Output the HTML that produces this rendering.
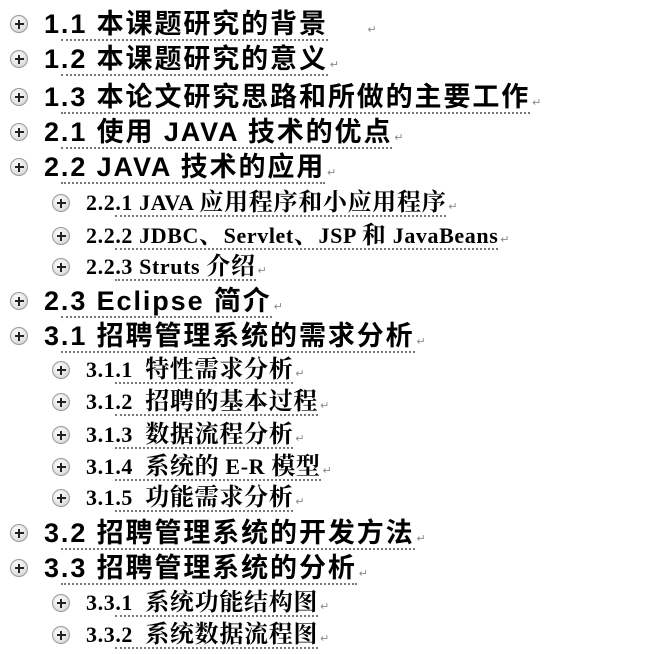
<!DOCTYPE html>
<html><head><meta charset="utf-8"><style>
body{margin:0;width:645px;height:654px;background:#fff;position:relative;overflow:hidden}
.r{position:absolute;white-space:nowrap;color:#000}
.l1{left:44px;font:bold 27px/30px "Liberation Sans","Noto Sans CJK SC",sans-serif;letter-spacing:1.9px}
.l2{left:86px;font:bold 22px/24px "Liberation Serif","Noto Serif CJK SC",serif;letter-spacing:0.6px}
.c{font-size:24px;letter-spacing:0.7px;line-height:20px}
.u{border-bottom:2px dotted #777}
.ic{position:absolute;width:16px;height:16px;border-radius:50%;border:1px solid #999;background:radial-gradient(circle at 40% 35%,#fff,#e2e2e2 60%,#c4c4c4);box-sizing:content-box}
.ic:before{content:"";position:absolute;left:3.5px;top:7px;width:9px;height:2.2px;background:#222}
.ic:after{content:"";position:absolute;left:6.9px;top:3.6px;width:2.2px;height:9px;background:#222}
.ret{font:11px "Liberation Sans",sans-serif;color:#888;letter-spacing:0;margin-left:2px}
</style></head><body>
<div class="ic" style="left:10px;top:15px"></div><div class="r l1" style="top:9px">1<span class="u">.1&nbsp;本课题研究的背景</span>&nbsp;&nbsp;&nbsp;&nbsp;<span class="ret">↵</span></div>
<div class="ic" style="left:10px;top:50px"></div><div class="r l1" style="top:44px">1<span class="u">.2&nbsp;本课题研究的意义</span><span class="ret">↵</span></div>
<div class="ic" style="left:10px;top:88px"></div><div class="r l1" style="top:82px">1<span class="u">.3&nbsp;本论文研究思路和所做的主要工作</span><span class="ret">↵</span></div>
<div class="ic" style="left:10px;top:123px"></div><div class="r l1" style="top:117px">2<span class="u">.1&nbsp;使用 JAVA 技术的优点</span><span class="ret">↵</span></div>
<div class="ic" style="left:10px;top:158px"></div><div class="r l1" style="top:152px">2<span class="u">.2 JAVA 技术的应用</span><span class="ret">↵</span></div>
<div class="ic" style="left:52px;top:194px"></div><div class="r l2" style="top:191px">2.2<span class="u">.1 JAVA <span class="c">应用程序和小应用程序</span></span><span class="ret">↵</span></div>
<div class="ic" style="left:52px;top:227px"></div><div class="r l2" style="top:224px">2.2<span class="u">.2 JDBC<span class="c">、</span>Servlet<span class="c">、</span>JSP <span class="c">和</span> JavaBeans</span><span class="ret">↵</span></div>
<div class="ic" style="left:52px;top:258px"></div><div class="r l2" style="top:255px">2.2<span class="u">.3 Struts <span class="c">介绍</span></span><span class="ret">↵</span></div>
<div class="ic" style="left:10px;top:292px"></div><div class="r l1" style="top:286px">2<span class="u">.3 Eclipse 简介</span><span class="ret">↵</span></div>
<div class="ic" style="left:10px;top:327px"></div><div class="r l1" style="top:321px">3<span class="u">.1&nbsp;招聘管理系统的需求分析</span><span class="ret">↵</span></div>
<div class="ic" style="left:52px;top:361px"></div><div class="r l2" style="top:358px">3.1<span class="u">.1&nbsp;&nbsp;<span class="c">特性需求分析</span></span><span class="ret">↵</span></div>
<div class="ic" style="left:52px;top:393px"></div><div class="r l2" style="top:390px">3.1<span class="u">.2&nbsp;&nbsp;<span class="c">招聘的基本过程</span></span><span class="ret">↵</span></div>
<div class="ic" style="left:52px;top:426px"></div><div class="r l2" style="top:423px">3.1<span class="u">.3&nbsp;&nbsp;<span class="c">数据流程分析</span></span><span class="ret">↵</span></div>
<div class="ic" style="left:52px;top:458px"></div><div class="r l2" style="top:455px">3.1<span class="u">.4&nbsp;&nbsp;<span class="c">系统的</span> E-R <span class="c">模型</span></span><span class="ret">↵</span></div>
<div class="ic" style="left:52px;top:489px"></div><div class="r l2" style="top:486px">3.1<span class="u">.5&nbsp;&nbsp;<span class="c">功能需求分析</span></span><span class="ret">↵</span></div>
<div class="ic" style="left:10px;top:524px"></div><div class="r l1" style="top:518px">3<span class="u">.2&nbsp;招聘管理系统的开发方法</span><span class="ret">↵</span></div>
<div class="ic" style="left:10px;top:559px"></div><div class="r l1" style="top:553px">3<span class="u">.3&nbsp;招聘管理系统的分析</span><span class="ret">↵</span></div>
<div class="ic" style="left:52px;top:594px"></div><div class="r l2" style="top:591px">3.3<span class="u">.1&nbsp;&nbsp;<span class="c">系统功能结构图</span></span><span class="ret">↵</span></div>
<div class="ic" style="left:52px;top:626px"></div><div class="r l2" style="top:623px">3.3<span class="u">.2&nbsp;&nbsp;<span class="c">系统数据流程图</span></span><span class="ret">↵</span></div>
</body></html>
